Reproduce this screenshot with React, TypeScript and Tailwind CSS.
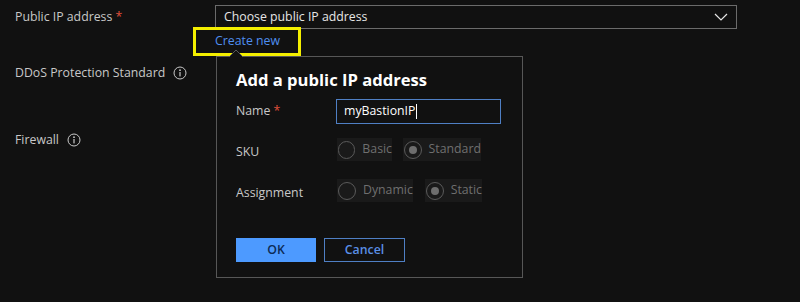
import React from "react";

function InfoIcon() {
  return (
    <svg width="14" height="14" viewBox="0 0 14 14" className="ml-[8px] shrink-0">
      <circle cx="7" cy="7" r="6" fill="none" stroke="#c8c8c8" strokeWidth="1" />
      <circle cx="7" cy="4.2" r="0.9" fill="#c8c8c8" />
      <rect x="6.4" y="6" width="1.2" height="4.4" fill="#c8c8c8" />
    </svg>
  );
}

function Radio({ label, checked, width }: { label: string; checked?: boolean; width: string }) {
  return (
    <div className={`flex h-[23px] items-center bg-[#1a1a1a] ${width}`}>
      <span className="ml-[1px] flex h-[18px] w-[18px] items-center justify-center rounded-full border border-[#5a5a5a]">
        {checked && <span className="h-[8px] w-[8px] rounded-full bg-[#6e6e6e]" />}
      </span>
      <span className="ml-[7px] text-[12.3px] text-[#6f6f6f]">{label}</span>
    </div>
  );
}

export default function App() {
  return (
    <main
      className="relative h-[302px] w-[800px] overflow-hidden bg-[#111111] text-[12.3px] text-[#c8c8c8]"
      style={{ fontFamily: '"Open Sans", "Noto Sans", sans-serif' }}
    >
      <div className="flex flex-col pl-[15px] pt-[5px]">
        <div className="flex h-[24px] items-center">
          <div className="w-[200px]">
            Public IP address <span className="text-[#e0503c]">*</span>
          </div>
          <div className="flex h-[24px] w-[522px] items-center justify-between border border-[#6b6b6b] pl-[8px] pr-[8px] text-[#e6e6e6]">
            <span>Choose public IP address</span>
            <svg width="14" height="8" viewBox="0 0 14 8">
              <path d="M1 1 L7 7 L13 1" fill="none" stroke="#e6e6e6" strokeWidth="1.2" />
            </svg>
          </div>
        </div>
        <div className="mt-[32px] flex h-[24px] items-center">
          DDoS Protection Standard
          <InfoIcon />
        </div>
        <div className="mt-[43px] flex h-[24px] items-center">
          Firewall
          <InfoIcon />
        </div>
      </div>

      {/* Create new link, highlighted */}
      <div className="absolute left-[193px] top-[27px] flex h-[29px] w-[108px] items-center border-[3px] border-[#f4ef00] pl-[19px] text-[12.3px] text-[#4f8ff0]">
        Create new
      </div>

      {/* Callout */}
      <div className="absolute left-[216px] top-[56px] h-[222px] w-[307px] border border-[#575757] bg-[#111111] pl-[19px] pt-[11px]">
        <svg width="14" height="8" viewBox="0 0 14 8" className="absolute left-[12px] top-[-8px]">
          <path d="M0 8 L7 1 L14 8" fill="#111111" stroke="#575757" strokeWidth="1" />
        </svg>
        <h2 className="text-[16.6px] font-bold leading-[24px] text-white">Add a public IP address</h2>
        <div className="mt-[7px] flex flex-col gap-[14px]">
          <div className="flex h-[25px] items-center">
            <div className="w-[100px]">
              Name <span className="text-[#e0503c]">*</span>
            </div>
            <div className="flex h-[25px] w-[165px] items-center border border-[#4f7fc4] pl-[7px] text-[12.3px] text-white">
              myBastionIP
              <span className="ml-[1px] h-[15px] w-[1px] bg-white" />
            </div>
          </div>
          <div className="flex h-[23px] items-center">
            <div className="mt-[5px] w-[101px]">SKU</div>
            <div className="flex gap-[11px]">
              <Radio label="Basic" width="w-[55px]" />
              <Radio label="Standard" checked width="w-[78px]" />
            </div>
          </div>
          <div className="mt-[4px] flex h-[23px] items-center">
            <div className="mt-[5px] w-[101px]">Assignment</div>
            <div className="flex gap-[12px]">
              <Radio label="Dynamic" width="w-[76px]" />
              <Radio label="Static" checked width="w-[57px]" />
            </div>
          </div>
        </div>
        <div className="mt-[36px] flex gap-[8px]">
          <button className="flex h-[24px] w-[80px] items-center justify-center bg-[#4d9aff] text-[12.3px] font-semibold text-[#0c2a55]">
            OK
          </button>
          <button className="flex h-[24px] w-[81px] items-center justify-center border border-[#4f7fc4] text-[12.3px] font-semibold text-[#5a8fe6]">
            Cancel
          </button>
        </div>
      </div>
    </main>
  );
}
